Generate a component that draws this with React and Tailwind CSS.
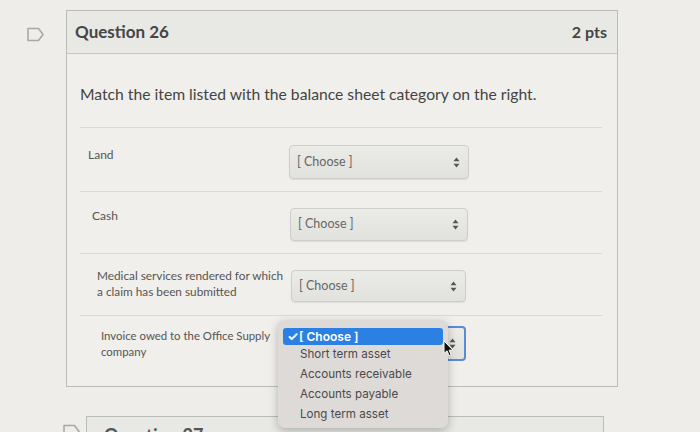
import React from "react";

const FlagIcon = () => (
  <svg width="19" height="15" viewBox="0 0 19 15" fill="none">
    <path
      d="M2 1.5 H12.5 L17 7.5 L12.5 13.5 H2 Z"
      stroke="#a9a9a6"
      strokeWidth="1.6"
      strokeLinejoin="round"
    />
  </svg>
);

const Arrows = () => (
  <svg width="7" height="11" viewBox="0 0 7 11">
    <path d="M3.5 0.5 L6.5 4.2 H0.5 Z" fill="#555" />
    <path d="M3.5 10.5 L6.5 6.8 H0.5 Z" fill="#555" />
  </svg>
);

// the focused select is covered by its open list, so its value isn't drawn
const Select = ({ className = "", focused = false }) => (
  <div
    className={
      "flex items-center justify-between rounded-[4px] bg-gradient-to-b from-[#ebebe8] to-[#e1e1de] pl-[7px] pr-[8px] text-[12.5px] text-[#666] " +
      (focused
        ? "border-2 border-[#5b8ad6]"
        : "border border-[#cdcdca] shadow-[0_1px_1px_rgba(0,0,0,0.08)]") +
      " " +
      className
    }
  >
    <span>{focused ? "" : "[ Choose ]"}</span>
    <Arrows />
  </div>
);

const rows = [
  {
    label: ["Land"],
    labelClass: "pl-[8px] pt-[2px] text-[12px]",
    colW: "w-[209px]",
    selectClass: "h-[34px] w-[180px]",
    rowClass: "pt-[17px] pb-[12px]",
  },
  {
    label: ["Cash"],
    labelClass: "pl-[12px] pt-0 text-[12px]",
    colW: "w-[210px]",
    selectClass: "h-[33px] w-[178px]",
    rowClass: "pt-[16px] pb-[12px]",
  },
  {
    label: ["Medical services rendered for which", "a claim has been submitted"],
    labelClass: "pl-[17px] pt-0 text-[11.8px]",
    colW: "w-[211px]",
    selectClass: "h-[32px] w-[175px] mt-[2px]",
    rowClass: "pt-[14px] pb-[13px]",
  },
  {
    label: ["Invoice owed to the Office Supply", "company"],
    labelClass: "pl-[21px] pt-[2px] text-[11.4px]",
    colW: "w-[205px]",
    selectClass: "h-[35px] w-[181px]",
    rowClass: "pt-[10px] pb-[25px]",
    focused: true,
  },
];

const options = [
  "Short term asset",
  "Accounts receivable",
  "Accounts payable",
  "Long term asset",
];

export default function App() {
  return (
    <div className="relative h-[432px] w-[700px] overflow-hidden bg-[#eeede9] font-['Lato',sans-serif]">
      {/* Question 26 */}
      <div className="flex pt-[10px]">
        <div className="w-[66px] pl-[26px] pt-[17px]">
          <FlagIcon />
        </div>
        <div className="w-[552px] border border-[#bbbbb7] bg-[#f0efeb]">
          <div className="flex h-[43px] items-center justify-between border-b border-[#c4c4c0] bg-[#e8e8e5] pl-[8px] pr-[10px]">
            <span className="text-[17px] font-bold text-[#454545]">Question 26</span>
            <span className="text-[16px] font-bold text-[#454545]">2 pts</span>
          </div>
          <div className="pl-[13px] pr-[15px]">
            <p className="pt-[31px] pb-[24px] text-[15.7px] leading-[18px] text-[#444]">
              Match the item listed with the balance sheet category on the right.
            </p>
            {rows.map((r, i) => (
              <div
                key={i}
                className={"flex items-start border-t border-[#d9d9d5] " + r.rowClass}
              >
                <div className={r.colW + " " + r.labelClass + " leading-[16px] text-[#555]"}>
                  {r.label.map((l) => (
                    <div key={l}>{l}</div>
                  ))}
                </div>
                <Select className={r.selectClass} focused={r.focused} />
              </div>
            ))}
          </div>
        </div>
      </div>

      {/* Question 27 (peeking) */}
      <div className="mt-[29px] flex">
        <div className="w-[86px] pl-[62px] pt-[8px]">
          <FlagIcon />
        </div>
        <div className="h-[40px] w-[518px] border border-[#bbbbb7] bg-[#e8e8e5] pl-[17px] pt-[5px]">
          <span className="text-[18px] font-bold text-[#555]">Question 27</span>
        </div>
      </div>

      {/* open dropdown */}
      <div className="absolute left-[278px] top-[320px] w-[170px] rounded-[7px] bg-[#dedad8] px-[5px] pt-[8px] pb-[3px] font-['Inter',sans-serif] shadow-[0_3px_10px_rgba(0,0,0,0.25)]">
        <div className="flex h-[17px] items-center rounded-[3px] bg-[#2c7fe3] pl-[4px] text-[12px] font-semibold text-white">
          <span className="w-[12px] text-[13px] font-bold leading-none">✓</span>
          <span>[ Choose ]</span>
        </div>
        {options.map((o) => (
          <div key={o} className="flex h-[20px] items-center pl-[17px] text-[11.6px] text-[#4a4a4a]">
            {o}
          </div>
        ))}
      </div>

      {/* mouse cursor */}
      <svg
        className="absolute left-[443px] top-[340px]"
        width="11"
        height="17"
        viewBox="0 0 11 17"
      >
        <path
          d="M1 1 L1 13.5 L4 10.8 L6.2 15.8 L8.2 15 L6.1 10.2 L10 10.2 Z"
          fill="#111"
          stroke="#fff"
          strokeWidth="1"
          strokeLinejoin="round"
        />
      </svg>
    </div>
  );
}
